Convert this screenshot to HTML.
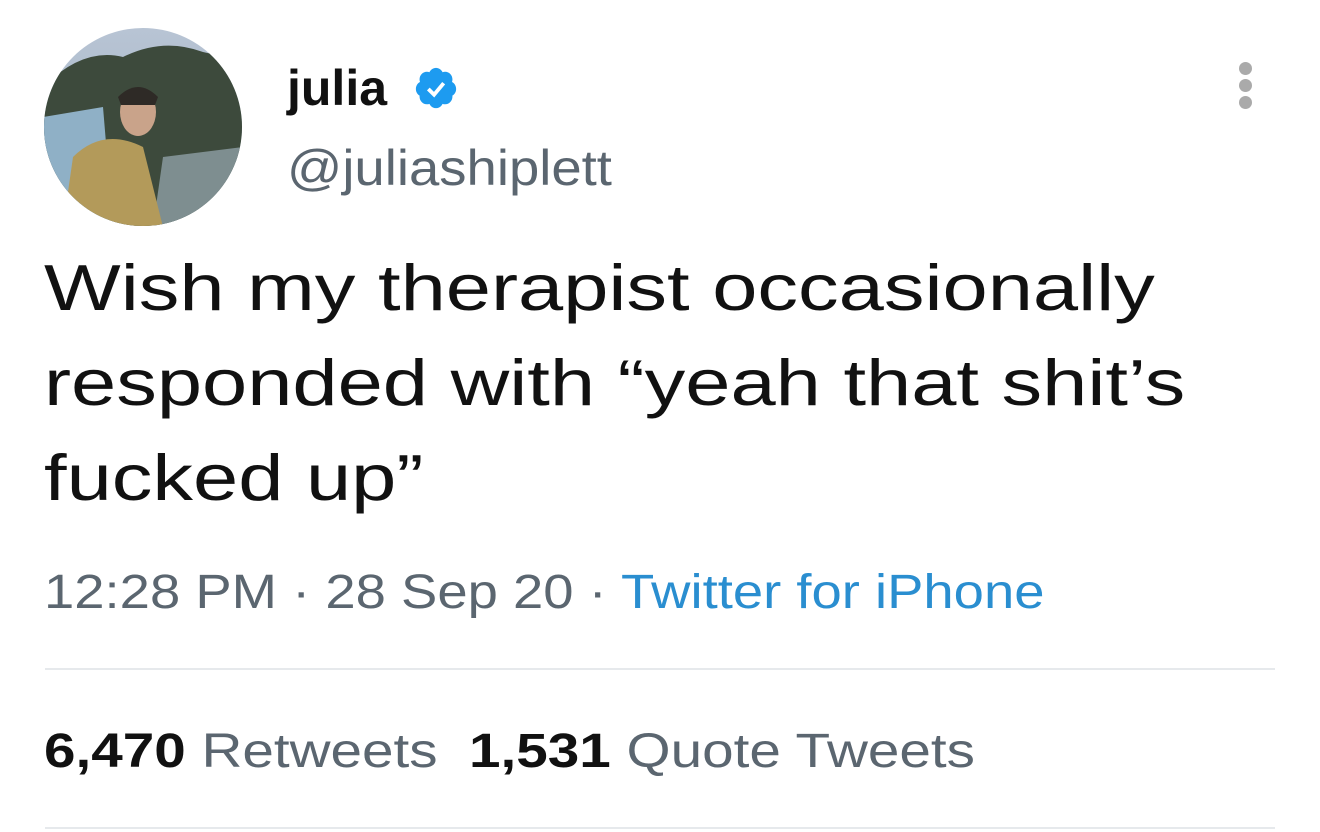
<!DOCTYPE html>
<html><head><style>
body{margin:0;width:1320px;height:832px;background:#fff;font-family:"Liberation Sans",Arial,sans-serif;position:relative;overflow:hidden}
.a{position:absolute;white-space:nowrap;transform-origin:0 0}
</style></head><body>
<svg class="a" style="left:43px;top:27px" width="200" height="200" viewBox="0 0 200 200">
<defs><clipPath id="c"><circle cx="100" cy="100" r="99"/></clipPath>
<linearGradient id="s" x1="0" y1="0" x2="0" y2="1"><stop offset="0" stop-color="#b8c4d4"/><stop offset="1" stop-color="#9fb3c3"/></linearGradient></defs>
<g clip-path="url(#c)">
<rect width="200" height="200" fill="url(#s)"/>
<path d="M0 60 Q40 20 80 30 Q120 10 160 25 Q190 30 200 60 L200 200 L0 200Z" fill="#3d4a3c"/>
<path d="M0 90 L60 80 L70 200 L0 200Z" fill="#8fb0c6"/>
<path d="M120 130 L200 120 L200 200 L110 200Z" fill="#7e8e90"/>
<path d="M30 130 Q60 100 100 120 L120 200 L20 200Z" fill="#b39a5a"/>
<ellipse cx="95" cy="85" rx="18" ry="24" fill="#c9a38a"/>
<path d="M75 70 Q95 50 115 70 L112 78 L78 78Z" fill="#2e2a26"/>
</g></svg>
<div class="a" style="left:287px;top:59px;font-size:50px;font-weight:bold;color:#111">julia</div>
<svg class="a" style="left:413px;top:65px" width="46" height="46" viewBox="0 0 24 24"><path fill="#1d9bf0" d="M22.5 12.5c0-1.58-.88-2.950-2.15-3.600.15-.44.23-.91.23-1.400 0-2.210-1.710-4-3.820-4-.47 0-.92.08-1.340.25C14.82 2.42 13.5 1.5 12 1.5s-2.820.92-3.420 2.250c-.42-.17-.87-.25-1.340-.25-2.110 0-3.820 1.790-3.820 4 0 .49.08.96.23 1.400C2.380 9.550 1.500 10.920 1.500 12.500c0 1.500.79 2.800 1.960 3.460-.03.17-.04.35-.04.54 0 2.210 1.710 4 3.820 4 .47 0 .92-.09 1.340-.25.6 1.330 1.920 2.250 3.420 2.250s2.820-.92 3.420-2.250c.42.16.87.25 1.340.25 2.110 0 3.820-1.790 3.820-4 0-.19-.01-.37-.04-.54 1.170-.66 1.960-1.960 1.960-3.460z"/><path fill="none" stroke="#fff" stroke-width="2" d="M8 12.5l3 3 5-6"/></svg>
<div class="a" style="left:287px;top:139px;font-size:50px;color:#5b6670;transform:scaleX(1.09)">@juliashiplett</div>
<div class="a" style="left:1239px;top:62px;width:14px"><div style="width:13px;height:13px;border-radius:50%;background:#aaa;margin-bottom:4px"></div><div style="width:13px;height:13px;border-radius:50%;background:#aaa;margin-bottom:4px"></div><div style="width:13px;height:13px;border-radius:50%;background:#aaa"></div></div>
<div class="a" style="left:44px;top:240px;font-size:65px;line-height:95px;color:#111;transform:scaleX(1.25)">Wish my therapist occasionally<br>responded with “yeah that shit’s<br>fucked up”</div>
<div class="a" style="left:44px;top:565px;font-size:48px;color:#5b6670;transform:scaleX(1.134)">12:28 PM · 28 Sep 20 · <span style="color:#2a8ed0">Twitter for iPhone</span></div>
<div class="a" style="left:45px;top:668px;width:1230px;height:2px;background:#e6e9ec"></div>
<div class="a" style="left:44px;top:724px;font-size:48px;color:#5b6670;transform:scaleX(1.18)"><b style="color:#111">6,470</b> Retweets &nbsp;<b style="color:#111">1,531</b> Quote Tweets</div>
<div class="a" style="left:45px;top:827px;width:1230px;height:2px;background:#e6e9ec"></div>
</body></html>
